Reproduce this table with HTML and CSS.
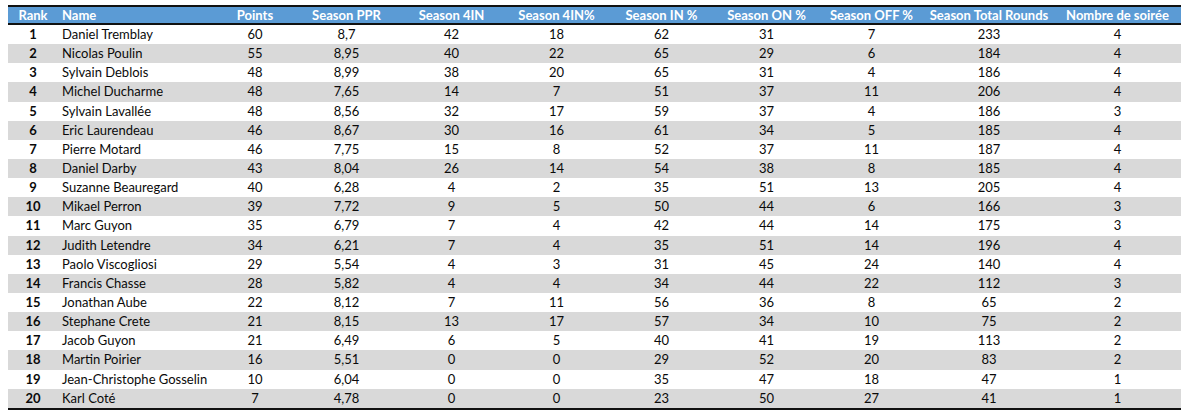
FILE: index.html
```
<!DOCTYPE html>
<html>
<head>
<meta charset="utf-8">
<link rel="stylesheet" href="styles.css">
</head>
<body>
<table class="stats">
<colgroup>
<col class="c-rank"><col class="c-name"><col class="c-points"><col class="c-std"><col class="c-std"><col class="c-std"><col class="c-std"><col class="c-std"><col class="c-std"><col class="c-rounds"><col class="c-soiree">
</colgroup>
<thead>
<tr><th>Rank</th><th class="left">Name</th><th>Points</th><th>Season PPR</th><th>Season 4IN</th><th>Season 4IN%</th><th>Season IN %</th><th>Season ON %</th><th>Season OFF %</th><th>Season Total Rounds</th><th>Nombre de soirée</th></tr>
</thead>
<tbody>
<tr><td class="rank">1</td><td class="name">Daniel Tremblay</td><td>60</td><td>8,7</td><td>42</td><td>18</td><td>62</td><td>31</td><td>7</td><td>233</td><td>4</td></tr>
<tr><td class="rank">2</td><td class="name">Nicolas Poulin</td><td>55</td><td>8,95</td><td>40</td><td>22</td><td>65</td><td>29</td><td>6</td><td>184</td><td>4</td></tr>
<tr><td class="rank">3</td><td class="name">Sylvain Deblois</td><td>48</td><td>8,99</td><td>38</td><td>20</td><td>65</td><td>31</td><td>4</td><td>186</td><td>4</td></tr>
<tr><td class="rank">4</td><td class="name">Michel Ducharme</td><td>48</td><td>7,65</td><td>14</td><td>7</td><td>51</td><td>37</td><td>11</td><td>206</td><td>4</td></tr>
<tr><td class="rank">5</td><td class="name">Sylvain Lavallée</td><td>48</td><td>8,56</td><td>32</td><td>17</td><td>59</td><td>37</td><td>4</td><td>186</td><td>3</td></tr>
<tr><td class="rank">6</td><td class="name">Eric Laurendeau</td><td>46</td><td>8,67</td><td>30</td><td>16</td><td>61</td><td>34</td><td>5</td><td>185</td><td>4</td></tr>
<tr><td class="rank">7</td><td class="name">Pierre Motard</td><td>46</td><td>7,75</td><td>15</td><td>8</td><td>52</td><td>37</td><td>11</td><td>187</td><td>4</td></tr>
<tr><td class="rank">8</td><td class="name">Daniel Darby</td><td>43</td><td>8,04</td><td>26</td><td>14</td><td>54</td><td>38</td><td>8</td><td>185</td><td>4</td></tr>
<tr><td class="rank">9</td><td class="name">Suzanne Beauregard</td><td>40</td><td>6,28</td><td>4</td><td>2</td><td>35</td><td>51</td><td>13</td><td>205</td><td>4</td></tr>
<tr><td class="rank">10</td><td class="name">Mikael Perron</td><td>39</td><td>7,72</td><td>9</td><td>5</td><td>50</td><td>44</td><td>6</td><td>166</td><td>3</td></tr>
<tr><td class="rank">11</td><td class="name">Marc Guyon</td><td>35</td><td>6,79</td><td>7</td><td>4</td><td>42</td><td>44</td><td>14</td><td>175</td><td>3</td></tr>
<tr><td class="rank">12</td><td class="name">Judith Letendre</td><td>34</td><td>6,21</td><td>7</td><td>4</td><td>35</td><td>51</td><td>14</td><td>196</td><td>4</td></tr>
<tr><td class="rank">13</td><td class="name">Paolo Viscogliosi</td><td>29</td><td>5,54</td><td>4</td><td>3</td><td>31</td><td>45</td><td>24</td><td>140</td><td>4</td></tr>
<tr><td class="rank">14</td><td class="name">Francis Chasse</td><td>28</td><td>5,82</td><td>4</td><td>4</td><td>34</td><td>44</td><td>22</td><td>112</td><td>3</td></tr>
<tr><td class="rank">15</td><td class="name">Jonathan Aube</td><td>22</td><td>8,12</td><td>7</td><td>11</td><td>56</td><td>36</td><td>8</td><td>65</td><td>2</td></tr>
<tr><td class="rank">16</td><td class="name">Stephane Crete</td><td>21</td><td>8,15</td><td>13</td><td>17</td><td>57</td><td>34</td><td>10</td><td>75</td><td>2</td></tr>
<tr><td class="rank">17</td><td class="name">Jacob Guyon</td><td>21</td><td>6,49</td><td>6</td><td>5</td><td>40</td><td>41</td><td>19</td><td>113</td><td>2</td></tr>
<tr><td class="rank">18</td><td class="name">Martin Poirier</td><td>16</td><td>5,51</td><td>0</td><td>0</td><td>29</td><td>52</td><td>20</td><td>83</td><td>2</td></tr>
<tr><td class="rank">19</td><td class="name">Jean-Christophe Gosselin</td><td>10</td><td>6,04</td><td>0</td><td>0</td><td>35</td><td>47</td><td>18</td><td>47</td><td>1</td></tr>
<tr><td class="rank">20</td><td class="name">Karl Coté</td><td>7</td><td>4,78</td><td>0</td><td>0</td><td>23</td><td>50</td><td>27</td><td>41</td><td>1</td></tr>
</tbody>
</table>
</body>
</html>
```
FILE: styles.css
```
html, body {
  margin: 0;
  padding: 0;
  background: #ffffff;
}
body {
  padding: 5px 0 0 8px;
  font-family: "Lato", "Liberation Sans", sans-serif;
  font-size: 13px;
  color: #0a0a0a;
}
.stats {
  border-collapse: collapse;
  table-layout: fixed;
  width: 1173px;
  border-top: 2px solid #111;
  border-bottom: 2px solid #111;
}
.c-rank { width: 50px; }
.c-name { width: 158px; }
.c-points { width: 78px; }
.c-std { width: 105px; }
.c-rounds { width: 130px; }
.c-soiree { width: 127px; }
.stats thead tr {
  background: #5b9bd5;
  border-bottom: 2px solid #111;
}
.stats th {
  height: 16px;
  padding: 0;
  color: #ffffff;
  font-weight: 700;
  text-align: center;
  white-space: nowrap;
  line-height: 16px;
}
.stats th.left {
  text-align: left;
  padding-left: 4px;
}
.stats td {
  height: 19.15px;
  padding: 0;
  text-align: center;
  line-height: 19px;
  white-space: nowrap;
}
.stats tbody tr:nth-child(even) {
  background: #d9d9d9;
}
.stats td.rank {
  font-weight: 700;
}
.stats td.name {
  text-align: left;
  padding-left: 4px;
}
```
